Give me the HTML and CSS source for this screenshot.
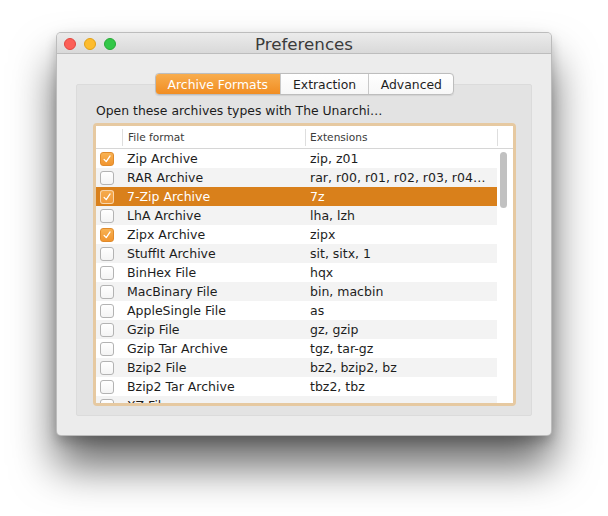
FILE: index.html
```html
<!DOCTYPE html>
<html>
<head>
<meta charset="utf-8">
<link rel="stylesheet" href="styles.css">
</head>
<body>
<div class="window">
  <div class="titlebar">
    <div class="lights">
      <span class="light close"></span>
      <span class="light minimize"></span>
      <span class="light zoom"></span>
    </div>
    <div class="title">Preferences</div>
    <div></div>
  </div>
  <div class="content">
    <div class="groupbox">
      <div class="tabs">
        <span class="tab active">Archive Formats</span>
        <span class="tab">Extraction</span>
        <span class="tab">Advanced</span>
      </div>
      <p class="prompt">Open these archives types with The Unarchi…</p>
      <div class="focus">
        <div class="table">
          <div class="thead">
            <span class="th th-check"></span>
            <span class="th">File format</span>
            <span class="th">Extensions</span>
            <span class="th th-rest"></span>
          </div>
          <div class="tbody">
            <div class="row"><span class="cell-check"><span class="cb checked"><svg viewBox="0 0 14 14"><path d="M3.6 7.4 L6.1 10 L10.6 3.4"/></svg></span></span><span class="cell">Zip Archive</span><span class="cell">zip, z01</span></div>
            <div class="row"><span class="cell-check"><span class="cb"></span></span><span class="cell">RAR Archive</span><span class="cell">rar, r00, r01, r02, r03, r04…</span></div>
            <div class="row selected"><span class="cell-check"><span class="cb checked"><svg viewBox="0 0 14 14"><path d="M3.6 7.4 L6.1 10 L10.6 3.4"/></svg></span></span><span class="cell">7-Zip Archive</span><span class="cell">7z</span></div>
            <div class="row"><span class="cell-check"><span class="cb"></span></span><span class="cell">LhA Archive</span><span class="cell">lha, lzh</span></div>
            <div class="row"><span class="cell-check"><span class="cb checked"><svg viewBox="0 0 14 14"><path d="M3.6 7.4 L6.1 10 L10.6 3.4"/></svg></span></span><span class="cell">Zipx Archive</span><span class="cell">zipx</span></div>
            <div class="row"><span class="cell-check"><span class="cb"></span></span><span class="cell">StuffIt Archive</span><span class="cell">sit, sitx, 1</span></div>
            <div class="row"><span class="cell-check"><span class="cb"></span></span><span class="cell">BinHex File</span><span class="cell">hqx</span></div>
            <div class="row"><span class="cell-check"><span class="cb"></span></span><span class="cell">MacBinary File</span><span class="cell">bin, macbin</span></div>
            <div class="row"><span class="cell-check"><span class="cb"></span></span><span class="cell">AppleSingle File</span><span class="cell">as</span></div>
            <div class="row"><span class="cell-check"><span class="cb"></span></span><span class="cell">Gzip File</span><span class="cell">gz, gzip</span></div>
            <div class="row"><span class="cell-check"><span class="cb"></span></span><span class="cell">Gzip Tar Archive</span><span class="cell">tgz, tar-gz</span></div>
            <div class="row"><span class="cell-check"><span class="cb"></span></span><span class="cell">Bzip2 File</span><span class="cell">bz2, bzip2, bz</span></div>
            <div class="row"><span class="cell-check"><span class="cb"></span></span><span class="cell">Bzip2 Tar Archive</span><span class="cell">tbz2, tbz</span></div>
            <div class="row"><span class="cell-check"><span class="cb"></span></span><span class="cell">XZ File</span><span class="cell">xz</span></div>
          </div>
          <div class="scroller"></div>
        </div>
      </div>
    </div>
  </div>
</div>
</body>
</html>
```

FILE: styles.css
```css
* { box-sizing: border-box; }

html, body {
  margin: 0;
  padding: 0;
  background: #ffffff;
}

body {
  min-height: 516px;
  font-family: "DejaVu Sans", "Liberation Sans", sans-serif;
  color: #222;
}

.window {
  margin: 32px 0 0 56px;
  width: 496px;
  height: 404px;
  background: #ececec;
  border: 1px solid rgba(0, 0, 0, 0.2);
  border-radius: 5px;
  box-shadow: 0 30px 44px rgba(0, 0, 0, 0.6), 0 6px 12px rgba(0, 0, 0, 0.2);
  overflow: hidden;
}

.titlebar {
  height: 21px;
  display: grid;
  grid-template-columns: 1fr auto 1fr;
  align-items: center;
  background: linear-gradient(#ebebeb, #d9d9d9);
  border-bottom: 1px solid #bdbdbd;
}

.lights {
  display: flex;
  gap: 8px;
  padding-left: 7px;
}

.light {
  width: 12px;
  height: 12px;
  border-radius: 50%;
}
.light.close { background: #fc5f57; border: 0.5px solid #e2463f; }
.light.minimize { background: #fdbc2e; border: 0.5px solid #e1a116; }
.light.zoom { background: #33c748; border: 0.5px solid #27aa35; }

.title {
  font-size: 16.7px;
  line-height: 20px;
  color: #3b3b3b;
  padding-top: 1px;
}

.content {
  padding: 30px 19px 19px 19px;
}

.groupbox {
  height: 332px;
  background: #e3e3e3;
  border: 1px solid #dbdbdb;
  border-radius: 2px;
  display: flex;
  flex-direction: column;
  padding: 0 15px 0 16px;
}

.tabs {
  align-self: center;
  margin-top: -12px;
  display: flex;
  height: 22px;
  border: 1px solid #bdbdbd;
  border-radius: 4px;
  background: linear-gradient(#ffffff, #f7f7f7);
  overflow: hidden;
  box-shadow: 0 0.5px 1px rgba(0, 0, 0, 0.08);
}

.tab {
  font-size: 12.4px;
  line-height: 20px;
  padding: 1px 11.5px 0 12px;
  color: #1e1e1e;
  border-left: 1px solid #c9c9c9;
}
.tab:first-child { border-left: 0; }
.tab.active {
  color: #ffffff;
  background: linear-gradient(#f8ad4e, #f18d22);
  padding: 1px 12px 0 12px;
}

.prompt {
  margin: 8px 0 0 3px;
  font-size: 12.4px;
  line-height: 16px;
  color: #1c1c1c;
}

.focus {
  margin-top: 4px;
  height: 283px;
  border: 3px solid #e6c9a1;
  border-radius: 4px;
  box-shadow: inset 0 0 0 0.5px #d2ad7c;
}

.table {
  position: relative;
  height: 100%;
  background: #ffffff;
  overflow: hidden;
}

.thead {
  height: 23px;
  display: grid;
  grid-template-columns: 27px 183px 192px 1fr;
  padding: 3px 0;
  border-bottom: 1px solid #d6d6d6;
}

.th {
  font-size: 10.6px;
  line-height: 17px;
  color: #3a3a3a;
  padding-left: 5px;
  border-right: 1px solid #dedede;
}
.th:nth-child(3) { padding-left: 4px; }
.th-rest { border-right: 0; }

.tbody {
  padding-right: 16px;
}

.row {
  height: 19px;
  display: grid;
  grid-template-columns: 27px 183px 1fr;
  align-items: center;
  font-size: 12.5px;
  color: #1d1d1d;
}
.row:nth-child(even) { background: #f3f3f3; }
.row.selected {
  background: #d9801b;
  color: #ffffff;
}

.cell {
  padding: 1px 0 0 4px;
  white-space: nowrap;
  line-height: 18px;
}

.cell-check {
  display: flex;
  align-items: center;
  padding-left: 4px;
  padding-top: 1px;
}

.cb {
  display: block;
  width: 14px;
  height: 14px;
  border: 1px solid #b3b3b3;
  border-radius: 3px;
  background: linear-gradient(#ffffff, #f4f4f4);
}
.cb svg {
  display: block;
  width: 12px;
  height: 12px;
}
.cb svg path {
  fill: none;
  stroke: #ffffff;
  stroke-width: 1.5;
  stroke-linecap: round;
  stroke-linejoin: round;
}
.cb.checked {
  border-color: #e08b2c;
  background: linear-gradient(#f8b253, #f1952f);
}
.row.selected .cb.checked {
  border-color: rgba(255, 255, 255, 0.55);
  background: linear-gradient(#f5aa4c, #f09a3a);
}

.scroller {
  position: absolute;
  left: 404px;
  top: 26px;
  width: 7px;
  height: 56px;
  border-radius: 4px;
  background: #c1c1c1;
}
```
